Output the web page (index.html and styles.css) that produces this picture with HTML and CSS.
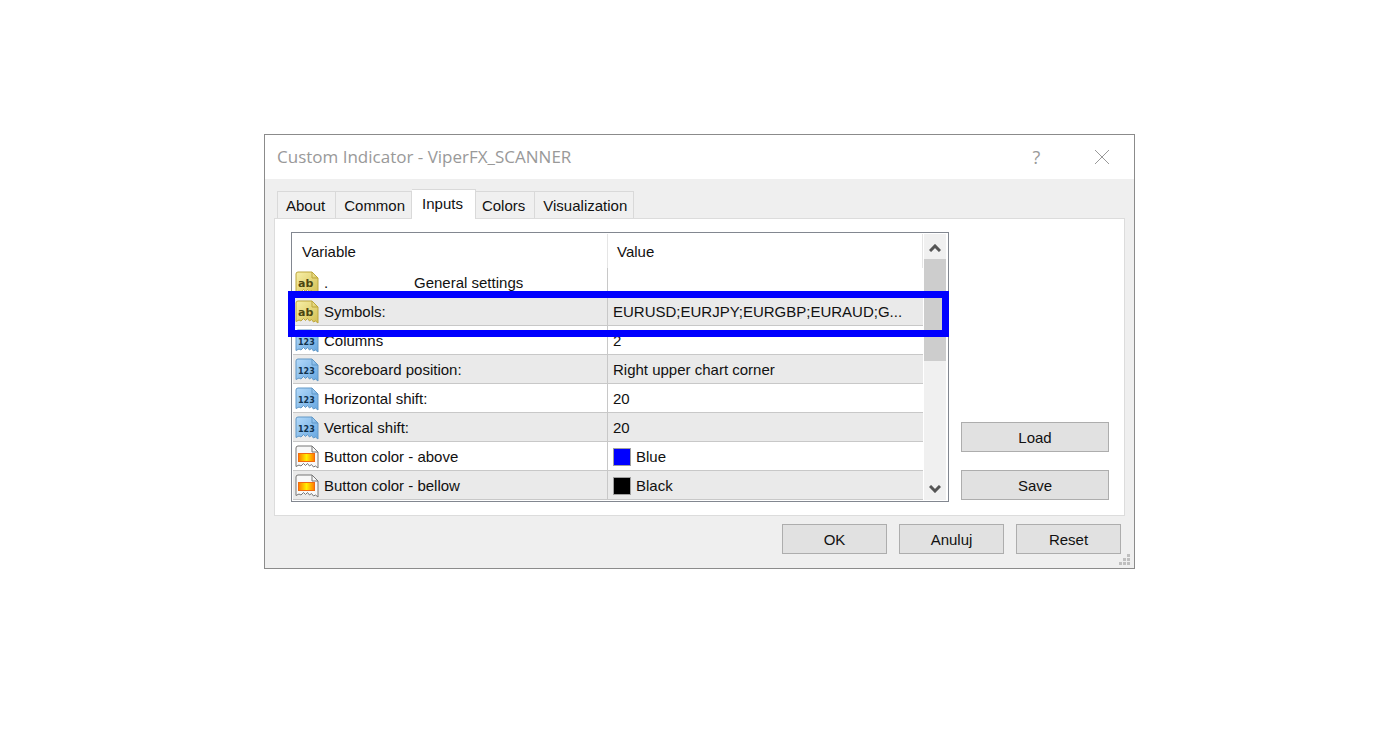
FILE: index.html
```
<!DOCTYPE html>
<html lang="en">
<head>
<meta charset="UTF-8">
<title>Custom Indicator - ViperFX_SCANNER</title>
<link rel="stylesheet" href="styles.css">
</head>

<body>

<!-- shared icons -->
<svg class="defs" width="0" height="0" aria-hidden="true">
    <defs>
        <linearGradient id="gYellow" x1="0" y1="0" x2="1" y2="1">
            <stop offset="0" stop-color="#f8f0a8"/>
            <stop offset="1" stop-color="#d3bf52"/>
        </linearGradient>
        <linearGradient id="gBlue" x1="0" y1="0" x2="1" y2="1">
            <stop offset="0" stop-color="#b4dafa"/>
            <stop offset="1" stop-color="#66a6e0"/>
        </linearGradient>
        <linearGradient id="gOrange">
            <stop offset="0" stop-color="#ff7800"/>
            <stop offset=".5" stop-color="#fff000"/>
            <stop offset="1" stop-color="#ff7800"/>
        </linearGradient>
    </defs>
    <symbol id="paper" viewBox="0 0 24 24">
        <path d="M1 21.5V3Q1 1 3 1H17L23 7V23L20.5 21L18.5 22L16.5 19.5L14.5 21L12.5 18.5L10.5 20.5L8.5 18.5L6 21L4 20Z"/>
        <path d="M17 1V7H23Z" fill-opacity=".6"/>
    </symbol>
</svg>

<main class="dialog">
    <header class="titlebar">
        <h1>Custom Indicator - ViperFX_SCANNER</h1>
        <button class="win-btn" aria-label="Help">?</button>
        <button class="win-btn" aria-label="Close">
            <svg width="16" height="16" viewBox="0 0 16 16"><path d="M1 1L15 15M15 1L1 15"/></svg>
        </button>
    </header>

    <div class="tabs" role="tablist">
        <button role="tab">About</button>
        <button role="tab">Common</button>
        <button role="tab" class="active" aria-selected="true">Inputs</button>
        <button role="tab">Colors</button>
        <button role="tab">Visualization</button>
    </div>

    <section class="pane">
        <div class="list">
            <table>
                <thead>
                    <tr><th>Variable</th><th>Value</th></tr>
                </thead>
                <tbody>
                    <tr>
                        <td><div class="cell"><svg class="icon ab" viewBox="0 0 24 24"><use href="#paper"/><text x="3" y="16">ab</text></svg><span class="dot">.</span>General settings</div></td>
                        <td></td>
                    </tr>
                    <tr>
                        <td><div class="cell"><svg class="icon ab" viewBox="0 0 24 24"><use href="#paper"/><text x="3" y="16">ab</text></svg>Symbols:</div></td>
                        <td>EURUSD;EURJPY;EURGBP;EURAUD;G...</td>
                    </tr>
                    <tr>
                        <td><div class="cell"><svg class="icon num" viewBox="0 0 24 24"><use href="#paper"/><text x="3" y="16">123</text></svg>Columns</div></td>
                        <td>2</td>
                    </tr>
                    <tr>
                        <td><div class="cell"><svg class="icon num" viewBox="0 0 24 24"><use href="#paper"/><text x="3" y="16">123</text></svg>Scoreboard position:</div></td>
                        <td>Right upper chart corner</td>
                    </tr>
                    <tr>
                        <td><div class="cell"><svg class="icon num" viewBox="0 0 24 24"><use href="#paper"/><text x="3" y="16">123</text></svg>Horizontal shift:</div></td>
                        <td>20</td>
                    </tr>
                    <tr>
                        <td><div class="cell"><svg class="icon num" viewBox="0 0 24 24"><use href="#paper"/><text x="3" y="16">123</text></svg>Vertical shift:</div></td>
                        <td>20</td>
                    </tr>
                    <tr>
                        <td><div class="cell"><svg class="icon col" viewBox="0 0 24 24"><use href="#paper"/><rect x="3.5" y="8.5" width="16" height="8"/></svg>Button color - above</div></td>
                        <td><div class="cell"><span class="swatch blue"></span>Blue</div></td>
                    </tr>
                    <tr>
                        <td><div class="cell"><svg class="icon col" viewBox="0 0 24 24"><use href="#paper"/><rect x="3.5" y="8.5" width="16" height="8"/></svg>Button color - bellow</div></td>
                        <td><div class="cell"><span class="swatch black"></span>Black</div></td>
                    </tr>
                </tbody>
            </table>
            <div class="scroll">
                <button aria-label="Scroll up"><svg width="12" height="8" viewBox="0 0 12 8"><path d="M1 7L6 2L11 7"/></svg></button>
                <div class="thumb"></div>
                <button aria-label="Scroll down"><svg width="12" height="8" viewBox="0 0 12 8"><path d="M1 1L6 6L11 1"/></svg></button>
            </div>
            <!-- frame around the Symbols row -->
            <div class="mark"></div>
        </div>
        <div class="side">
            <button class="btn">Load</button>
            <button class="btn">Save</button>
        </div>
    </section>

    <footer class="actions">
        <button class="btn">OK</button>
        <button class="btn">Anuluj</button>
        <button class="btn">Reset</button>
    </footer>
    <svg class="grip" width="12" height="12" viewBox="0 0 12 12">
        <path d="M8 0h3v3h-3zM4 4h3v3h-3zM8 4h3v3h-3zM0 8h3v3h-3zM4 8h3v3h-3zM8 8h3v3h-3z"/>
    </svg>
</main>

</body>
</html>
```
FILE: styles.css
```
* { box-sizing: border-box; }
body {
    margin: 0;
    padding: 134px 17px 16px 16px;
    background: #fff;
    color: #111;
    font: 15px/20px "Liberation Sans", Arial, sans-serif;
}
button {
    font: inherit;
    color: inherit;
    padding: 0;
}
.defs { position: absolute; }

.dialog {
    position: relative;
    max-width: 871px;
    margin: 0 auto;
    border: 1px solid #8b8b8b;
    background: #efefef;
}

.titlebar {
    display: flex;
    align-items: center;
    height: 44px;
    padding-left: 12px;
    background: #fff;
    color: #999;
    font-family: "Open Sans", "Noto Sans", sans-serif;
}
.titlebar h1 {
    flex: 1;
    margin: 0;
    font-size: 17px;
    font-weight: normal;
}
.win-btn {
    display: flex;
    align-items: center;
    justify-content: center;
    width: 65px;
    height: 42px;
    border: 0;
    background: none;
    font-size: 18px;
}
.win-btn path {
    fill: none;
    stroke: #999;
}

.tabs {
    display: flex;
    align-items: flex-end;
    padding: 10px 12px 0;
}
.tabs button {
    height: 27px;
    padding: 2px 6px 0 8px;
    border: 1px solid #d9d9d9;
    border-width: 1px 1px 0 0;
    background: #f0f0f0;
}
.tabs button:first-child {
    padding-right: 10px;
    border-left-width: 1px;
}
.tabs .active {
    position: relative;
    height: 30px;
    margin-bottom: -1px;
    padding: 0 12px 2px 10px;
    background: #fff;
}
.tabs .active + button { padding: 2px 9px 0 6px; }

.pane {
    display: flex;
    gap: 12px;
    margin: 0 9px;
    padding: 13px 15px 13px 16px;
    border: 1px solid #dcdcdc;
    background: #fff;
}
.list {
    position: relative;
    display: flex;
    flex: 1;
    gap: 1px;
    border: 1px solid #828790;
    padding: 1px 2px 1px 1px;
}
table {
    flex: 1;
    width: 100%;
    table-layout: fixed;
    border-collapse: separate;
    border-spacing: 0;
}
th {
    height: 34px;
    padding: 2px 9px 0;
    border-right: 1px solid #e5e5e5;
    font-weight: normal;
    text-align: left;
}
td {
    height: 29px;
    padding: 2px 5px 0;
    border-bottom: 1px solid #c8c8c8;
    white-space: nowrap;
}
td:first-child {
    padding: 1px 2px 0;
    border-right: 1px solid #c8c8c8;
}
tbody tr:nth-child(even) { background: #eaeaea; }
.cell {
    display: flex;
    align-items: center;
    gap: 5px;
}
.icon {
    width: 24px;
    height: 24px;
    font-family: "DejaVu Sans", sans-serif;
    font-weight: bold;
}
.ab use { fill: url(#gYellow); stroke: #bda63c; }
.ab text { font-size: 11px; fill: #4c4510; }
.num use { fill: url(#gBlue); stroke: #6298c6; }
.num text { font-size: 8px; fill: #10324e; }
.col use { fill: #f8f8f8; stroke: #777; }
.col rect { fill: url(#gOrange); stroke: #f06a10; }
.dot { width: 85px; }
.swatch {
    width: 18px;
    height: 18px;
    border: 1px solid #a0a0a0;
}
.blue { background: #00f; }
.black { background: #000; }

.scroll {
    display: flex;
    flex-direction: column;
    width: 22px;
    background: #f0f0f0;
}
.scroll button {
    height: 25px;
    border: 0;
    background: none;
}
.scroll button:last-child { margin-top: auto; }
.scroll path {
    fill: none;
    stroke: #555;
    stroke-width: 3;
}
.thumb {
    height: 102px;
    background: #cdcdcd;
}
.mark {
    position: absolute;
    top: 58px;
    left: -4px;
    right: -1px;
    height: 46px;
    border: 7px solid #00f;
}

.side {
    display: flex;
    flex-direction: column;
    justify-content: flex-end;
    gap: 18px;
    width: 148px;
    padding-bottom: 2px;
}
.btn {
    height: 30px;
    padding-top: 1px;
    border: 1px solid #adadad;
    background: #e1e1e1;
}
.actions {
    display: flex;
    justify-content: flex-end;
    gap: 12px;
    padding: 8px 13px 14px;
}
.actions .btn { width: 105px; }
.grip {
    position: absolute;
    right: 3px;
    bottom: 2px;
    fill: #bfbfbf;
}
```
